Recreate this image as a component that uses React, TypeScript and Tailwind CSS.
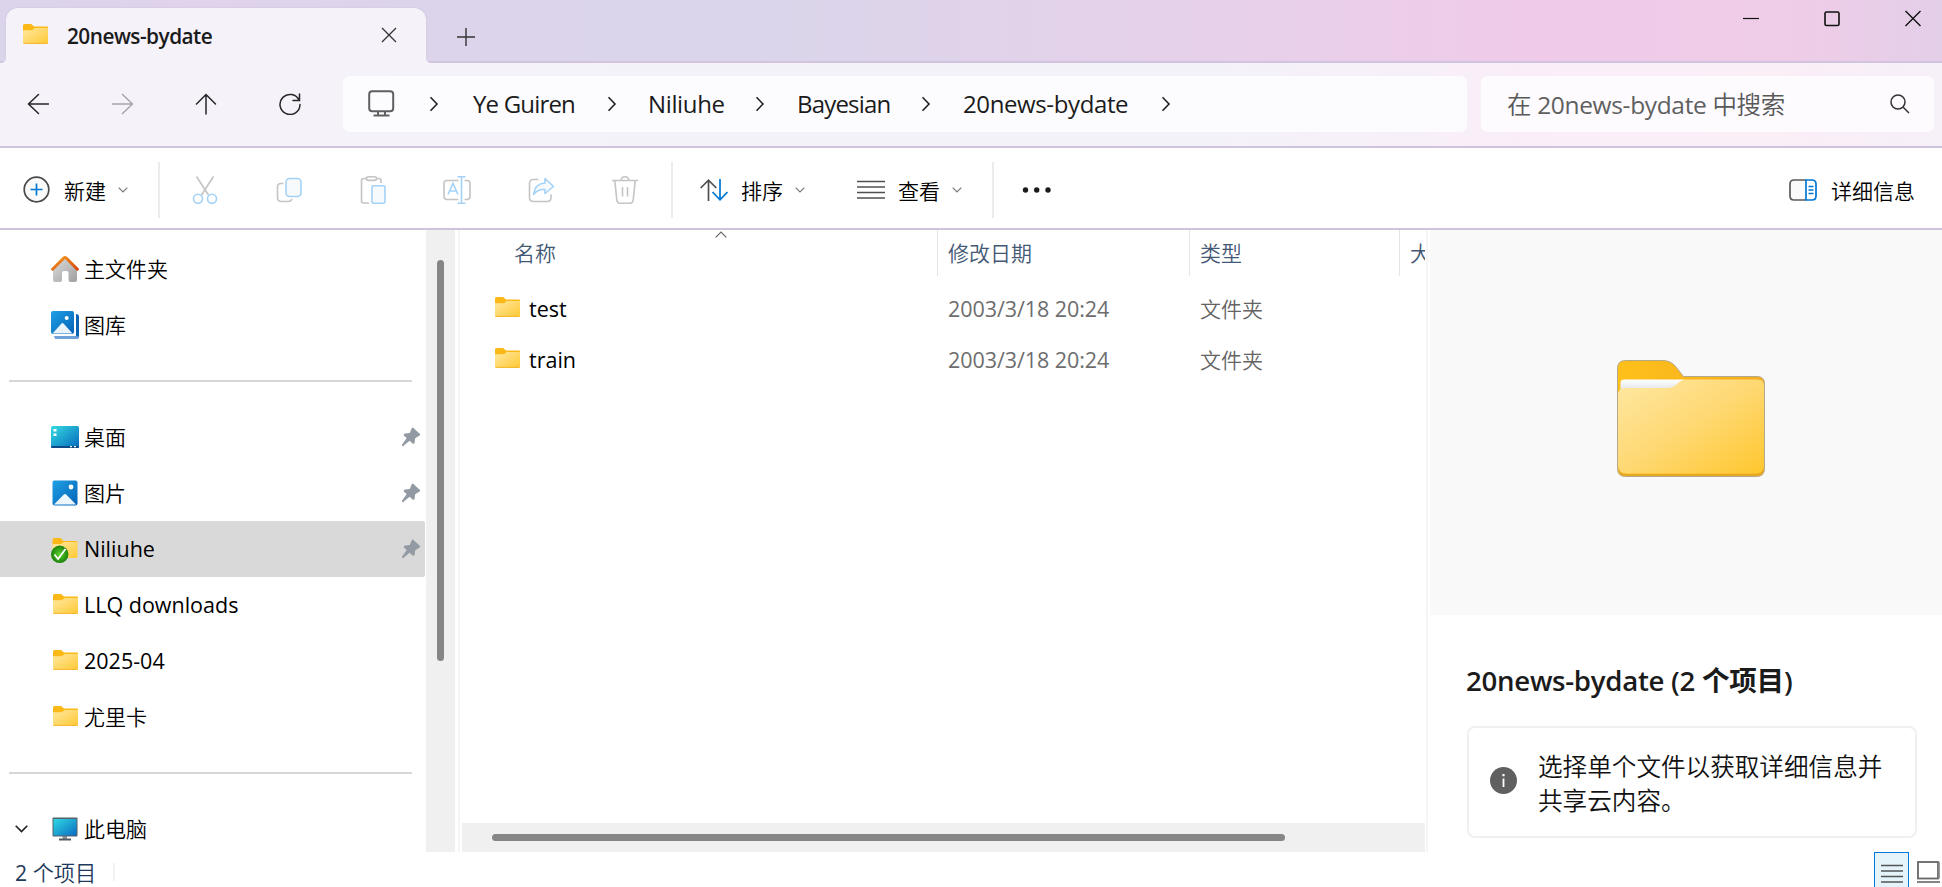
import React from 'react';

type IconProps = { className?: string };

const GRAY = '#c4c4c4';
const SKY = '#a3d2f6';

/* ---------- Icons ---------- */

const SmallFolder: React.FC<IconProps> = ({ className = '' }) => (
  <svg width="25" height="20" viewBox="0 0 25 20" className={`shrink-0 ${className}`}>
    <defs>
      <linearGradient id="smallFolder" x1="0" y1="0" x2="1" y2="1">
        <stop offset="0" stopColor="#ffe8a0" />
        <stop offset="1" stopColor="#ffc934" />
      </linearGradient>
    </defs>
    <path d="M1.5 0H8.2L11 2.6H24Q25 2.6 25 3.6V8H0V1.5Q0 0 1.5 0Z" fill="#fbb917" />
    <path d="M0 6.2H8.6Q9.4 6.2 10 5.6L11.6 4H25V18.7Q25 20 23.7 20H1.3Q0 20 0 18.7Z" fill="url(#smallFolder)" />
    <path d="M0.6 19.4H24.4" stroke="#f0b429" strokeWidth="0.9" />
  </svg>
);

const LargeFolder = () => (
  <svg width="148" height="117" viewBox="0 0 148 117">
    <defs>
      <linearGradient id="largeFront" x1="0" y1="0" x2="1" y2="1">
        <stop offset="0" stopColor="#ffe8a3" />
        <stop offset="0.5" stopColor="#fed872" />
        <stop offset="1" stopColor="#ffc72e" />
      </linearGradient>
      <linearGradient id="largeBack" x1="0" y1="0" x2="1" y2="0">
        <stop offset="0" stopColor="#ffc01a" />
        <stop offset="1" stopColor="#f3ad20" />
      </linearGradient>
      <linearGradient id="largePaper" x1="0" y1="0" x2="0" y2="1">
        <stop offset="0" stopColor="#ffffff" />
        <stop offset="1" stopColor="#dde0e6" />
      </linearGradient>
    </defs>
    <path d="M8.5 0.5H46Q54 0.5 59 7L66.5 16.5H140Q147.5 16.5 147.5 24V108.5Q147.5 116.5 139.5 116.5H8.5Q0.5 116.5 0.5 108.5V8.5Q0.5 0.5 8.5 0.5Z" fill="url(#largeBack)" />
    <path d="M3.5 32V23Q3.5 19.5 7 19.5H67V28H8Z" fill="url(#largePaper)" />
    <path d="M1 33Q3 28 8 28H50Q56 28 60 24L63 21.5Q65.5 19.5 69 19.5H141Q147 19.5 147 26V106Q147 113.5 139 113.5H9Q1 113.5 1 106Z" fill="url(#largeFront)" />
    <path d="M1 107Q3 114 9 114H139Q145 114 147 107Q147 116 139 116H9Q1 116 1 107Z" fill="#e5a823" />
    <path d="M8.5 0.5H46Q54 0.5 59 7L66.5 16.5H140Q147.5 16.5 147.5 24V108.5Q147.5 116.5 139.5 116.5H8.5Q0.5 116.5 0.5 108.5V8.5Q0.5 0.5 8.5 0.5Z" fill="none" stroke="#b5a98c" />
  </svg>
);

const HomeIcon = () => (
  <svg width="28" height="28" viewBox="0 0 28 28">
    <defs>
      <linearGradient id="homeBody" x1="0" y1="0" x2="1" y2="1">
        <stop offset="0" stopColor="#dedede" />
        <stop offset="1" stopColor="#9f9f9f" />
      </linearGradient>
      <linearGradient id="homeRoof" x1="0" y1="0" x2="1" y2="1">
        <stop offset="0" stopColor="#f79a1c" />
        <stop offset="1" stopColor="#d64510" />
      </linearGradient>
    </defs>
    <path d="M14 3L26 14V25Q26 27 24 27H19.5Q17.5 27 17.5 25V18Q17.5 16 15.5 16H13Q11 16 11 18V25Q11 27 9 27H4Q2 27 2 25V14Z" fill="url(#homeBody)" />
    <path d="M1.6 14.2L12.8 3Q14 1.9 15.2 3L26.4 14.2" fill="none" stroke="url(#homeRoof)" strokeWidth="3" strokeLinecap="round" />
  </svg>
);

const BlueGradient = ({ id }: { id: string }) => (
  <defs>
    <linearGradient id={id} x1="0" y1="0" x2="1" y2="1">
      <stop offset="0" stopColor="#1ea0e6" />
      <stop offset="1" stopColor="#0562b6" />
    </linearGradient>
  </defs>
);

const GalleryIcon = () => (
  <svg width="28" height="28" viewBox="0 0 28 28">
    <BlueGradient id="gallery" />
    <path d="M25 3Q28 3 28 6V25Q28 28 25 28H6Q3.5 28 3.5 25H25Z" fill="#0c63b4" />
    <path d="M4 25H24L28 25.5Q27.5 28 25 28H6Q3.5 28 3.5 25Z" fill="#6fa2d8" />
    <rect x="-1" y="-1" width="25.5" height="25.5" rx="3" fill="#fff" />
    <rect width="23" height="23" rx="2" fill="url(#gallery)" />
    <path d="M1.5 22.5L10.5 12.5Q11.5 11.5 12.5 12.5L21.5 22.5Z" fill="#e9f4fd" />
    <circle cx="15.7" cy="7" r="2" fill="#fff" />
  </svg>
);

const PictureIcon = () => (
  <svg width="28" height="28" viewBox="0 0 28 28">
    <BlueGradient id="picture" />
    <rect x="1.5" y="1.5" width="25" height="25" rx="2" fill="url(#picture)" />
    <path d="M3 25.5L12.8 15.5Q14 14.5 15.2 15.5L25 25.5Z" fill="#eef6fd" />
    <circle cx="20" cy="8" r="2.4" fill="#fff" />
  </svg>
);

const DesktopIcon = () => (
  <svg width="28" height="22" viewBox="0 0 28 22">
    <defs>
      <linearGradient id="desktop" x1="0" y1="0" x2="1" y2="1">
        <stop offset="0" stopColor="#35dbe2" />
        <stop offset="1" stopColor="#0568bb" />
      </linearGradient>
    </defs>
    <rect width="28" height="22" rx="1.5" fill="url(#desktop)" />
    <path d="M0 20H28V20.5Q28 22 26.5 22H1.5Q0 22 0 20.5Z" fill="#0b4a86" />
    <path d="M2.5 3H5.5V5.5H2.5ZM2.5 7.5H5.5V10H2.5Z" fill="#fff" />
    <path d="M19 20.7H21M23 20.7H25" stroke="#fff" strokeWidth="1.2" />
  </svg>
);

const ComputerIcon = () => (
  <svg width="28" height="24" viewBox="0 0 28 24">
    <defs>
      <linearGradient id="computer" x1="0" y1="0" x2="1" y2="1">
        <stop offset="0" stopColor="#2fd9e4" />
        <stop offset="1" stopColor="#0a6cc0" />
      </linearGradient>
    </defs>
    <path d="M11.5 18H16V22H11.5Z" fill="#8c959d" />
    <rect x="1.5" y="0.5" width="25" height="19" rx="1" fill="#566068" />
    <rect x="2.5" y="2" width="23" height="16.5" fill="url(#computer)" />
    <path d="M8 22.5H20" stroke="#4f5a63" strokeWidth="2" />
  </svg>
);

const SyncedFolderIcon = () => (
  <svg width="28" height="28" viewBox="0 0 28 28">
    <defs>
      <linearGradient id="synced" x1="0" y1="0" x2="1" y2="1">
        <stop offset="0" stopColor="#ffe8a0" />
        <stop offset="1" stopColor="#ffc934" />
      </linearGradient>
      <radialGradient id="syncedBadge">
        <stop offset="0" stopColor="#5fd12c" />
        <stop offset="1" stopColor="#1b820b" />
      </radialGradient>
    </defs>
    <path d="M3 3H9.5L12.5 6H25Q26.5 6 26.5 7.5V11H1.5V4.5Q1.5 3 3 3Z" fill="#fbb917" />
    <path d="M1.5 9H10L13 7H26.5V21.5Q26.5 23 25 23H3Q1.5 23 1.5 21.5Z" fill="url(#synced)" />
    <circle cx="8.7" cy="19.3" r="8.7" fill="url(#syncedBadge)" />
    <path d="M3.5 19.5L7 24L14.5 14" fill="none" stroke="#fff" strokeWidth="1.8" />
  </svg>
);

const PinIcon: React.FC<IconProps> = ({ className = '' }) => (
  <svg width="20" height="20" viewBox="0 0 20 20" className={className}>
    <path d="M12.2 0.8L19 7Q19.5 8 18.3 8.8L14.2 11.2L13.6 15.8Q12.8 17.5 11.5 16.4L8.6 13.8L2 19.2Q0.5 19.4 1 17.8L5.7 11L3 8.7Q2 7.2 3.9 6.6L8.7 6L10.6 1.5Q11.3 0.2 12.2 0.8Z" fill="#929ba3" />
  </svg>
);

const Chevron: React.FC<IconProps> = ({ className = '' }) => (
  <svg width="10" height="6" viewBox="0 0 10 6" className={className}>
    <path d="M0.7 0.7L5 5L9.3 0.7" fill="none" stroke="#777" strokeWidth="1.2" />
  </svg>
);

const CrumbArrow = () => (
  <svg width="10" height="16" viewBox="0 0 10 16">
    <path d="M1.5 1.2L8 8L1.5 14.8" fill="none" stroke="#222" strokeWidth="1.6" />
  </svg>
);

const NavIcon = ({ d, color = '#262626' }: { d: string; color?: string }) => (
  <svg width="22" height="22" viewBox="0 0 22 22">
    <path d={d} fill="none" stroke={color} strokeWidth="1.5" strokeLinecap="round" />
  </svg>
);

const CutIcon = () => (
  <svg width="28" height="28" viewBox="0 0 28 28" fill="none" strokeWidth="1.6">
    <path d="M5.5 0.5L17.5 19M22.5 0.5L10.5 19" stroke={GRAY} />
    <circle cx="7" cy="22.8" r="4.5" stroke={SKY} fill="#fff" />
    <circle cx="21" cy="22.8" r="4.5" stroke={SKY} fill="#fff" />
  </svg>
);

const CopyIcon = () => (
  <svg width="28" height="28" viewBox="0 0 28 28" fill="none" strokeWidth="1.6">
    <path d="M8.5 7.5H6Q2.5 7.5 2.5 11V21.5Q2.5 25.5 6.5 25.5H13Q16 25.5 17 23" stroke={GRAY} />
    <rect x="11" y="2.5" width="15" height="18" rx="3.5" stroke={SKY} fill="#f7fafd" />
  </svg>
);

const PasteIcon = () => (
  <svg width="28" height="28" viewBox="0 0 28 28" fill="none" strokeWidth="1.6">
    <path d="M10 27H4.5Q2.5 27 2.5 25V4.5Q2.5 2.5 4.5 2.5H7.5M17.5 2.5H20Q22 2.5 22 4.5V7" stroke={GRAY} />
    <rect x="7.5" y="0.8" width="10" height="3.6" rx="1.8" stroke={GRAY} />
    <rect x="13" y="9.8" width="13" height="17.4" rx="1.5" stroke={SKY} fill="#f7fafd" />
  </svg>
);

const RenameIcon = () => (
  <svg width="28" height="28" viewBox="0 0 28 28" fill="none" strokeWidth="1.6">
    <path d="M15.5 4.5H4Q1 4.5 1 7.5V20.5Q1 23.5 4 23.5H15.5M21.5 4.5H24Q27 4.5 27 7.5V20.5Q27 23.5 24 23.5H21.5" stroke={GRAY} />
    <path d="M5 18.5L10 7.5L15 18.5M6.8 15H13.2M18.5 1V27M14.5 0.8H22.5M14.5 27.2H22.5" stroke={SKY} />
  </svg>
);

const ShareIcon = () => (
  <svg width="28" height="28" viewBox="0 0 28 28" fill="none" strokeWidth="1.6">
    <path d="M11.5 3.5H6.5Q2.5 3.5 2.5 7.5V21.5Q2.5 25.5 6.5 25.5H20Q24 25.5 24 21.5V18.5" stroke={GRAY} />
    <path d="M18 2.5L26.5 10.5L18 17.5V13.5Q10.5 13 6.5 18.5Q8 7.5 18 7Z" stroke={SKY} strokeLinejoin="round" fill="#f7fafd" />
  </svg>
);

const TrashIcon = () => (
  <svg width="28" height="28" viewBox="0 0 28 28" fill="none" strokeWidth="1.6" stroke={GRAY}>
    <path d="M1 4.5H27M10 4.5Q10.5 0.8 14 0.8Q17.5 0.8 18 4.5M3.8 4.5L5.8 24Q6.2 27.2 9 27.2H19Q21.8 27.2 22.2 24L24.2 4.5M11.5 11V20.5M16.5 11V20.5" />
  </svg>
);

/* ---------- Window sections ---------- */

const TitleBar = () => (
  <header className="flex h-[63px] items-stretch bg-[linear-gradient(90deg,#dbd4eb_0%,#e0d3eb_10%,#dcd4eb_22%,#dad5ea_40%,#e2d2ea_54%,#e9d0ea_66%,#efcbe9_79%,#efcce8_92%,#e4cfe8_100%)]">
    <div className="w-[6px] border-b-2 border-[#cfc5de]" />
    <div className="relative mt-2 flex w-[420px] items-center rounded-t-[12px] bg-[#f5f2fa] shadow-[0_0_2px_#c9bfda] [clip-path:inset(-3px_-6px_0_-6px)]">
      <svg width="6" height="6" className="absolute bottom-0 -left-[6px]">
        <path d="M6 0V6H0Q6 6 6 0Z" fill="#f5f2fa" />
      </svg>
      <svg width="6" height="6" className="absolute -right-[6px] bottom-0">
        <path d="M0 0V6H6Q0 6 0 0Z" fill="#f5f2fa" />
      </svg>
      <SmallFolder className="-mt-[3px] ml-[17px]" />
      <span className="ml-[19px] w-[314px] text-[20.8px] leading-[30px] font-semibold tracking-[-0.025em] text-[#1b1b1b]">20news-bydate</span>
      <svg width="16" height="16" viewBox="0 0 16 16" className="-mt-[2px] shrink-0">
        <path d="M1 1L15 15M15 1L1 15" stroke="#333" strokeWidth="1.3" />
      </svg>
    </div>
    <div className="flex flex-1 items-start border-b-2 border-[#d2c4de]">
      <svg width="18" height="18" viewBox="0 0 18 18" className="mt-[28px] ml-[31px]">
        <path d="M9 0V18M0 9H18" stroke="#333" strokeWidth="1.4" />
      </svg>
      <div className="mt-[10px] ml-auto flex items-center gap-[65px] pr-[21px]">
        <svg width="16" height="18" viewBox="0 0 16 18">
          <path d="M0 8.5H16" stroke="#111" strokeWidth="1.2" />
        </svg>
        <svg width="16" height="18" viewBox="0 0 16 18">
          <rect x="1" y="2" width="14" height="13.5" rx="1.5" fill="none" stroke="#111" strokeWidth="1.6" />
        </svg>
        <svg width="16" height="18" viewBox="0 0 16 18">
          <path d="M0.5 1L15.5 16M15.5 1L0.5 16" stroke="#111" strokeWidth="1.4" />
        </svg>
      </div>
    </div>
  </header>
);

const crumbs = [
  { label: 'Ye Guiren', width: 'w-[134px]', gap: 'w-[41px]', text: 'tracking-[-0.034em]' },
  { label: 'Niliuhe', width: 'w-[107px]', gap: 'w-[42px]', text: 'tracking-[-0.015em]' },
  { label: 'Bayesian', width: 'w-[124px]', gap: 'w-[42px]', text: 'tracking-[-0.034em]' },
  { label: '20news-bydate', width: 'w-[198px]', gap: 'w-[42px]', text: 'tracking-[-0.016em]' },
];

const NavBar = () => (
  <nav className="flex h-[85px] items-center border-b-2 border-[#cfc3dc] bg-[linear-gradient(90deg,#f5f2fa_0%,#f4f2f9_62%,#faeef8_80%,#faeef7_92%,#f6f0f8_100%)] pb-[1px]">
    <div className="flex w-[343px] items-center gap-[62px] pl-[27px]">
      <NavIcon d="M1.5 11H21.5M11.5 1.5L1.5 11L11.5 20.5" />
      <NavIcon d="M1.5 11H21.500M11.5 1.5L21.5 11L11.5 20.5" color="#a6a4ac" />
      <NavIcon d="M11 21V1.5M1.5 11L11 1.5L20.5 11" />
      <NavIcon d="M20.2 7.5A10 10 0 1 0 21 11.5M20.5 1V7.5H14" />
    </div>
    <div className="flex h-[56px] w-[1124px] items-center rounded-[7px] bg-[#fcfcfe] pl-[25px]">
      <svg width="27" height="27" viewBox="0 0 27 27" fill="none" stroke="#5f5f5f" strokeWidth="2" className="-mt-[2px]">
        <rect x="1.2" y="1.2" width="24" height="20" rx="3" />
        <path d="M10 21.5V25M17 21.5V25M5.5 25.5H21.5" />
      </svg>
      <span className="ml-[34px] flex w-[44px]">
        <CrumbArrow />
      </span>
      {crumbs.map((crumb) => (
        <React.Fragment key={crumb.label}>
          <span className={`${crumb.width} ${crumb.text} shrink-0 text-[24px] leading-[34px] whitespace-nowrap text-[#1b1b1b]`}>{crumb.label}</span>
          <span className={crumb.gap}>
            <CrumbArrow />
          </span>
        </React.Fragment>
      ))}
    </div>
    <div className="ml-[14px] flex h-[56px] w-[453px] items-center justify-between rounded-[7px] bg-[#fdfbfe] pr-[24px] pl-[26px]">
      <span className="pt-[1px] text-[24.5px] leading-[34px] font-[350] tracking-[-0.014em] text-[#585858]">
        在 <span className="font-normal text-[#606060]">20news-bydate</span> 中搜索
      </span>
      <svg width="20" height="20" viewBox="0 0 20 20" fill="none" stroke="#333" strokeWidth="1.5">
        <circle cx="8" cy="8" r="7" />
        <path d="M13 13L19 19" />
      </svg>
    </div>
  </nav>
);

const Divider: React.FC<IconProps> = ({ className = '' }) => (
  <div className={`h-[56px] w-[2px] shrink-0 bg-[#ececec] ${className}`} />
);

const Toolbar = () => (
  <div className="flex h-[82px] items-center border-b-2 border-[#cfc3dc] bg-white pt-[4px] text-[21px] leading-[30px] font-[350] text-black">
    <svg width="27" height="27" viewBox="0 0 27 27" fill="none" className="-mt-[2px] ml-[23px]">
      <circle cx="13.5" cy="13.5" r="12.3" stroke="#4a4a4a" strokeWidth="1.7" fill="#fafafa" />
      <path d="M13.5 7.5V19.5M7.5 13.5H19.5" stroke="#0078d4" strokeWidth="1.7" />
    </svg>
    <span className="ml-[14px] w-[54px] pt-[1px]">新建</span>
    <Chevron className="mr-[30px]" />
    <Divider />
    <div className="flex w-[512px] gap-[56px] pl-[31px]">
      <CutIcon />
      <CopyIcon />
      <PasteIcon />
      <RenameIcon />
      <ShareIcon />
      <TrashIcon />
    </div>
    <Divider className="-ml-[1px]" />
    <svg width="28" height="22" viewBox="0 0 28 22" fill="none" strokeWidth="1.7" className="ml-[27px]">
      <path d="M8.5 22V1.5M0.7 9L8.5 1.2L16.3 9" stroke="#505050" />
      <path d="M20 0V20.5M12.5 13L20 20.8L27.5 13" stroke="#0078d4" />
    </svg>
    <span className="ml-[13px] w-[54px] pt-[1px]">排序</span>
    <Chevron />
    <svg width="28" height="20" viewBox="0 0 28 20" className="ml-[52px]">
      <path d="M0 1.5H28M0 7H28M0 12.5H28M0 18H28" stroke="#505050" strokeWidth="1.6" />
    </svg>
    <span className="ml-[13px] w-[54px] pt-[1px]">查看</span>
    <Chevron />
    <Divider className="ml-[30px]" />
    <svg width="30" height="8" viewBox="0 0 30 8" fill="#1b1b1b" className="ml-[28px]">
      <circle cx="3.5" cy="4" r="2.7" />
      <circle cx="14.7" cy="4" r="2.7" />
      <circle cx="26" cy="4" r="2.7" />
    </svg>
    <div className="ml-auto flex items-center pr-[27px]">
      <svg width="28" height="22" viewBox="0 0 28 22" fill="none" strokeWidth="1.7">
        <path d="M17 1H5Q1 1 1 5V17Q1 21 5 21H17" stroke="#5a5a5a" fill="#fafafa" />
        <path d="M17 1H23Q27 1 27 5V17Q27 21 23 21H17Z" stroke="#0078d4" fill="#fff" />
        <path d="M19.5 7.5H24.5M19.5 11H24.5M19.5 14.5H24.5" stroke="#0078d4" />
      </svg>
      <span className="ml-[14px] pt-[1px]">详细信息</span>
    </div>
  </div>
);

type SideItem = {
  label?: string;
  icon?: React.ReactNode;
  latin?: boolean;
  pinned?: boolean;
  selected?: boolean;
  expandable?: boolean;
};

const sideItems: SideItem[] = [
  { label: '主文件夹', icon: <HomeIcon /> },
  { label: '图库', icon: <GalleryIcon /> },
  {},
  { label: '桌面', icon: <DesktopIcon />, pinned: true },
  { label: '图片', icon: <PictureIcon />, pinned: true },
  { label: 'Niliuhe', icon: <SyncedFolderIcon />, latin: true, pinned: true, selected: true },
  { label: 'LLQ downloads', icon: <SmallFolder className="-mt-[2px]" />, latin: true },
  { label: '2025-04', icon: <SmallFolder className="-mt-[2px]" />, latin: true },
  { label: '尤里卡', icon: <SmallFolder className="-mt-[2px]" /> },
  {},
  { label: '此电脑', icon: <ComputerIcon />, expandable: true },
];

const Sidebar = () => (
  <aside className="flex w-[460px] shrink-0 border-r-2 border-[#f5f5f5]">
    <div className="w-[426px] overflow-hidden pt-[11px]">
      {sideItems.map((item, i) =>
        item.label ? (
          <div key={i} className={`flex h-[56px] w-[425px] items-center rounded-r-[2px] ${item.selected ? 'bg-[#d9d9d9]' : ''}`}>
            <span className="flex w-[51px] pl-[15px]">
              {item.expandable && (
                <svg width="13" height="8" viewBox="0 0 13 8">
                  <path d="M0.7 0.7L6.5 6.5L12.3 0.7" fill="none" stroke="#222" strokeWidth="1.6" />
                </svg>
              )}
            </span>
            <span className="flex w-[28px] justify-center">{item.icon}</span>
            <span className={`ml-[5px] flex-1 leading-[30px] text-black ${item.latin ? 'text-[21.5px]' : 'text-[21px] font-[350]'}`}>{item.label}</span>
            {item.pinned && <PinIcon className="mr-[4px]" />}
          </div>
        ) : (
          <div key={i} className="flex h-[56px] items-center">
            <div className="ml-[9px] h-[2px] w-[403px] bg-[#d6d6d6]" />
          </div>
        )
      )}
    </div>
    <div className="w-[29px] bg-[#f0f0f0] pt-[30px] pl-[11px]">
      <div className="h-[401px] w-[7px] rounded-full bg-[#868686]" />
    </div>
  </aside>
);

const files = [
  { name: 'test', date: '2003/3/18 20:24', type: '文件夹' },
  { name: 'train', date: '2003/3/18 20:24', type: '文件夹' },
];

const FileList = () => (
  <main className="flex w-[968px] shrink-0 flex-col border-r-2 border-[#f5f5f5] pr-[1px] text-[21px] leading-[30px]">
    <div className="relative flex h-[46px] overflow-hidden font-[350] text-[#435874]">
      <svg width="12" height="7" viewBox="0 0 12 7" className="absolute top-[1px] left-[255px]">
        <path d="M0.7 6.3L6 1L11.3 6.3" fill="none" stroke="#666" strokeWidth="1.2" />
      </svg>
      <span className="w-[478px] shrink-0 border-r border-[#e5e5e5] pt-[8px] pl-[54px]">名称</span>
      <span className="w-[252px] shrink-0 border-r border-[#e5e5e5] pt-[8px] pl-[10px]">修改日期</span>
      <span className="w-[210px] shrink-0 border-r border-[#e5e5e5] pt-[8px] pl-[10px]">类型</span>
      <span className="shrink-0 pt-[8px] pl-[10px]">大小</span>
    </div>
    <div className="flex-1 pt-[7px]">
      {files.map((file) => (
        <div key={file.name} className="flex h-[51px] items-center text-[#6d6d6d]">
          <SmallFolder className="-mt-[3px] ml-[35px]" />
          <span className="ml-[9px] w-[419px] text-[21.5px] text-black">{file.name}</span>
          <span className="w-[252px] text-[21.5px] tracking-[-0.003em]">{file.date}</span>
          <span className="font-[350] text-[#646464]">{file.type}</span>
        </div>
      ))}
    </div>
    <div className="ml-[2px] h-[29px] bg-[#f0f0f0] pt-[11px] pl-[30px]">
      <div className="h-[7px] w-[793px] rounded-full bg-[#868686]" />
    </div>
  </main>
);

const DetailsPane = () => (
  <section className="flex-1 pl-[2px]">
    <div className="flex h-[385px] justify-center bg-[#f9f9f9] pt-[130px] pl-[10px]">
      <LargeFolder />
    </div>
    <h2 className="mt-[45px] ml-[36px] text-[27.6px] leading-[40px] font-semibold tracking-[-0.01em] whitespace-nowrap text-[#1b1b1b]">
      20news-bydate (2 <span className="font-bold">个项目</span>)
    </h2>
    <div className="mt-[26px] ml-[37px] flex h-[112px] w-[450px] items-center rounded-[8px] border-2 border-[#f0f0f0] pl-[21px]">
      <svg width="27" height="27" viewBox="0 0 27 27" className="mb-[3px] shrink-0">
        <circle cx="13.5" cy="13.5" r="13.5" fill="#606060" />
        <path d="M12.6 11.5H14.4V20H12.6ZM12.4 7H14.6V9.2H12.4Z" fill="#fff" />
      </svg>
      <p className="ml-[21px] w-[352px] shrink-0 pt-[3px] text-[24.6px] leading-[33.5px] font-[350] text-[#111]">选择单个文件以获取详细信息并共享云内容。</p>
    </div>
  </section>
);

const StatusBar = () => (
  <footer className="flex h-[35px] items-start bg-white">
    <span className="mt-[6px] ml-[15px] w-[98px] text-[21.2px] leading-[30px] font-[350] text-[#1e395b]">
      <span className="font-normal">2</span> 个项目
    </span>
    <div className="mt-[11px] h-[18px] w-[2px] bg-[#f3f3f3]" />
    <div className="ml-auto flex items-start pr-[2px]">
      <div className="flex h-[36px] w-[35px] justify-center border border-[#0078d7] bg-[#e5f3fb] pt-[11px]">
        <svg width="22" height="20" viewBox="0 0 22 20">
          <path d="M0 1.5H22M0 7H22M0 12.5H22M0 18H22" stroke="#555" strokeWidth="1.5" />
        </svg>
      </div>
      <svg width="23" height="23" viewBox="0 0 23 23" fill="none" stroke="#666" className="mt-[9px] ml-[8px]">
        <rect x="1" y="1" width="20" height="16.5" strokeWidth="1.8" />
        <path d="M0 21H23" strokeWidth="1.6" />
        <path d="M22.3 1V17.5" stroke="#999" strokeWidth="1.4" />
      </svg>
    </div>
  </footer>
);

const App: React.FC = () => (
  <div className="flex h-[887px] w-[1942px] flex-col overflow-hidden bg-white font-['Open_Sans','Noto_Sans_CJK_SC',sans-serif]">
    <TitleBar />
    <NavBar />
    <Toolbar />
    <div className="flex h-[622px] shrink-0 overflow-hidden">
      <Sidebar />
      <FileList />
      <DetailsPane />
    </div>
    <StatusBar />
  </div>
);

export default App;
